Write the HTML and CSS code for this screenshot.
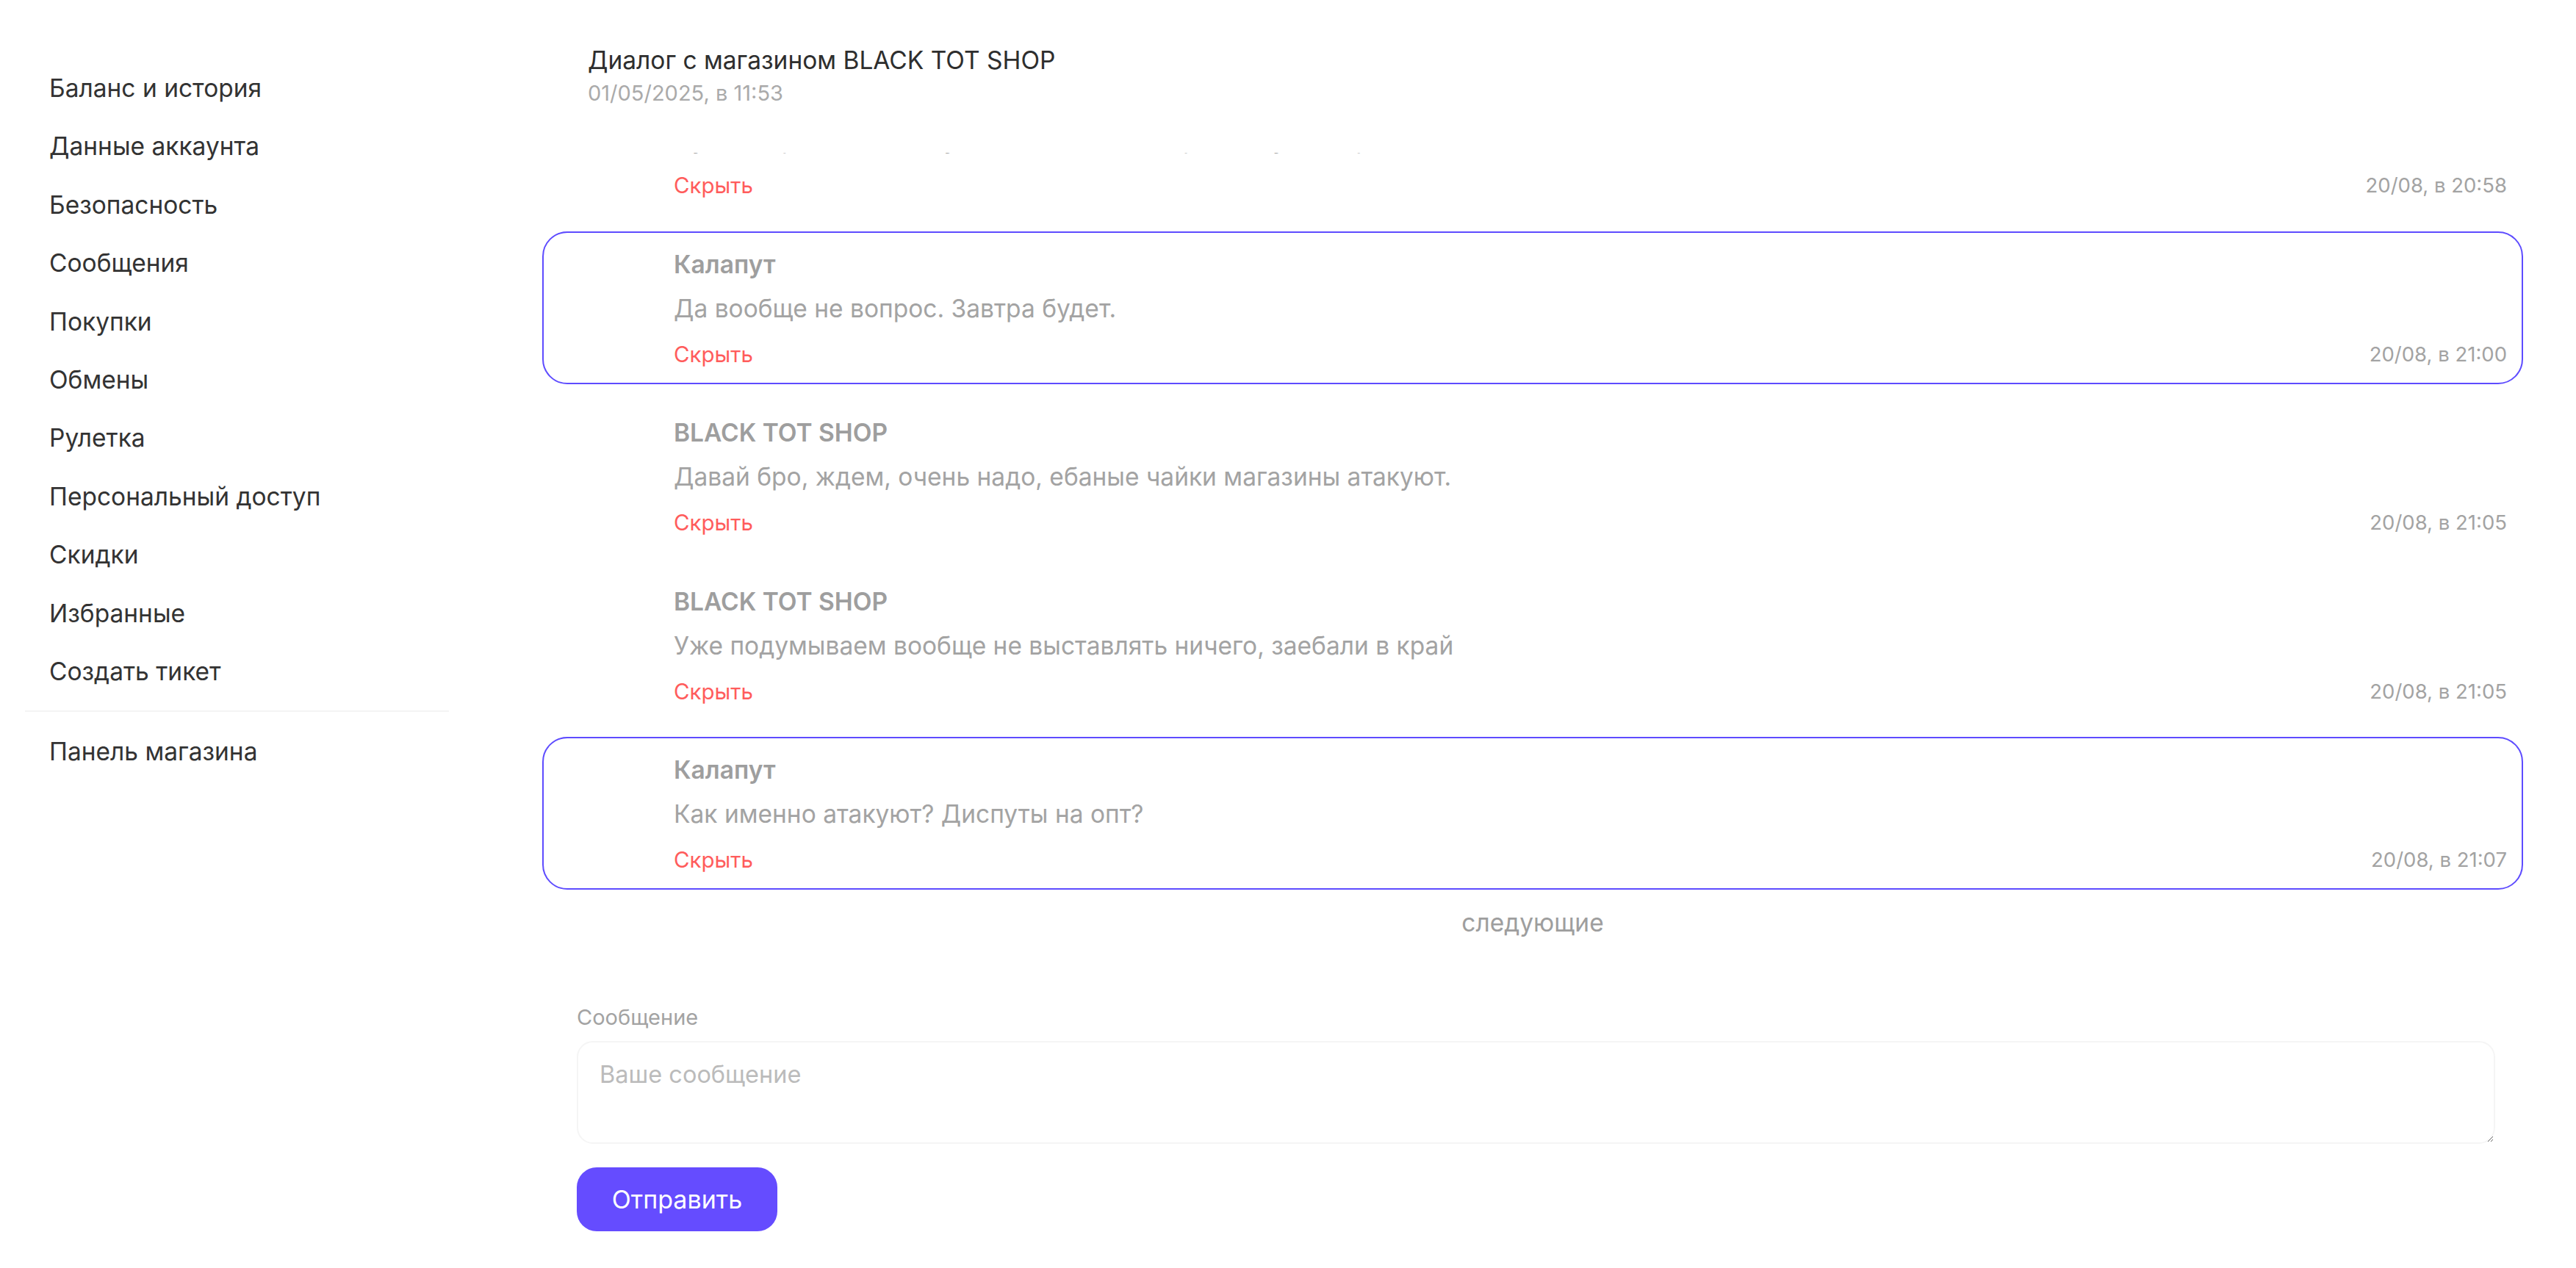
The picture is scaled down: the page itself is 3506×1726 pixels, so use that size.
FILE: index.html
```html
<!DOCTYPE html>
<html lang="ru">
<head>
  <meta charset="UTF-8" />
  <meta name="viewport" content="width=device-width, initial-scale=1.0"/>
  <title>Диалог с магазином BLACK TOT SHOP</title>
  <link rel="stylesheet" href="styles.css">
</head>
<body>

  <div class="page">

    <!-- SIDEBAR -->
    <aside class="sidebar">
      <nav class="menu">
        <a href="#">Баланс и история</a>
        <a href="#">Данные аккаунта</a>
        <a href="#">Безопасность</a>
        <a href="#">Сообщения</a>
        <a href="#">Покупки</a>
        <a href="#">Обмены</a>
        <a href="#">Рулетка</a>
        <a href="#">Персональный доступ</a>
        <a href="#">Скидки</a>
        <a href="#">Избранные</a>
        <a href="#">Создать тикет</a>
      </nav>
      <div class="divider"></div>
      <nav class="menu">
        <a href="#">Панель магазина</a>
      </nav>
    </aside>

    <!-- DIALOG -->
    <main class="dialog">
      <header class="dialog-head">
        <div class="dialog-title">Диалог с магазином BLACK TOT SHOP</div>
        <div class="dialog-date">01/05/2025, в 11:53</div>
      </header>

      <div class="messages">
        <div class="msg">
          <div class="msg-author">Калапут</div>
          <div class="msg-text">Привет, когда будет пополнение по опту?</div>
          <div class="msg-foot">
            <a href="#" class="msg-hide">Скрыть</a>
            <span class="msg-time">20/08, в 20:41</span>
          </div>
        </div>

        <div class="msg">
          <div class="msg-author">BLACK TOT SHOP</div>
          <div class="msg-text">Ну что, бро, сегодня будет? Очень ждем, ребята уже спрашивают.</div>
          <div class="msg-foot">
            <a href="#" class="msg-hide">Скрыть</a>
            <span class="msg-time">20/08, в 20:58</span>
          </div>
        </div>

        <div class="msg msg-own">
          <div class="msg-author">Калапут</div>
          <div class="msg-text">Да вообще не вопрос. Завтра будет.</div>
          <div class="msg-foot">
            <a href="#" class="msg-hide">Скрыть</a>
            <span class="msg-time">20/08, в 21:00</span>
          </div>
        </div>

        <div class="msg">
          <div class="msg-author">BLACK TOT SHOP</div>
          <div class="msg-text">Давай бро, ждем, очень надо, ебаные чайки магазины атакуют.</div>
          <div class="msg-foot">
            <a href="#" class="msg-hide">Скрыть</a>
            <span class="msg-time">20/08, в 21:05</span>
          </div>
        </div>

        <div class="msg">
          <div class="msg-author">BLACK TOT SHOP</div>
          <div class="msg-text">Уже подумываем вообще не выставлять ничего, заебали в край</div>
          <div class="msg-foot">
            <a href="#" class="msg-hide">Скрыть</a>
            <span class="msg-time">20/08, в 21:05</span>
          </div>
        </div>

        <div class="msg msg-own">
          <div class="msg-author">Калапут</div>
          <div class="msg-text">Как именно атакуют? Диспуты на опт?</div>
          <div class="msg-foot">
            <a href="#" class="msg-hide">Скрыть</a>
            <span class="msg-time">20/08, в 21:07</span>
          </div>
        </div>
      </div>

      <a href="#" class="more">следующие</a>

      <form class="reply">
        <label class="reply-label" for="replyText">Сообщение</label>
        <textarea class="reply-input" id="replyText" placeholder="Ваше сообщение"></textarea>
        <button type="button" class="reply-btn">Отправить</button>
      </form>
    </main>

  </div>

</body>
</html>
```

FILE: styles.css
```css
body {
  margin: 0;
  background: #fff;
  font-family: 'Inter', 'Noto Sans', sans-serif;
  color: #333;
}

a {
  text-decoration: none;
  color: inherit;
}

.page {
  display: flex;
  gap: 127px;
  padding: 0 72px 0 34px;
}

/* SIDEBAR */

.sidebar {
  width: 577px;
  flex-shrink: 0;
  padding-top: 81px;
}

.menu {
  display: flex;
  flex-direction: column;
}

.menu a {
  padding: 20px 33px;
  font-size: 33.5px;
  line-height: 39.4px;
  color: #333;
}

.divider {
  height: 2px;
  background: #f4f4f4;
  margin: 13px 0 15px;
}

/* DIALOG */

.dialog {
  flex: 1;
  min-width: 0;
  display: flex;
  flex-direction: column;
}

.dialog-head {
  padding: 60px 0 0 62px;
}

.dialog-title {
  font-size: 33.5px;
  line-height: 44px;
  color: #2e2e2e;
}

.dialog-date {
  font-size: 29px;
  line-height: 36px;
  margin-top: 5px;
  color: #aaa;
}

.messages {
  height: 1003px;
  margin-top: 63px;
  overflow: hidden;
  display: flex;
  flex-direction: column;
  justify-content: flex-end;
  gap: 21.5px;
}

.msg {
  flex-shrink: 0;
  height: 208px;
  box-sizing: border-box;
  border: 2px solid transparent;
  border-radius: 34px;
  padding: 21px 20px 0 177px;
}

.msg-own {
  border-color: #5e4cff;
}

.msg-author {
  font-size: 33.5px;
  line-height: 44px;
  font-weight: 600;
  color: #9e9e9e;
}

.msg-text {
  font-size: 33.5px;
  line-height: 44px;
  margin-top: 16px;
  color: #a3a3a3;
}

.msg-foot {
  display: flex;
  justify-content: space-between;
  align-items: center;
  margin-top: 22px;
  line-height: 36px;
}

.msg-hide {
  font-size: 29.5px;
  color: #ff5c5c;
}

.msg-time {
  font-size: 27.5px;
  color: #a3a3a3;
}

.more {
  align-self: center;
  margin-top: 25px;
  font-size: 33.5px;
  line-height: 40px;
  color: #9e9e9e;
}

/* REPLY FORM */

.reply {
  display: flex;
  flex-direction: column;
  align-items: flex-start;
  margin: 91px 38px 0 47px;
}

.reply-label {
  font-size: 29px;
  line-height: 36px;
  color: #a3a3a3;
}

.reply-input {
  width: 100%;
  height: 140px;
  box-sizing: border-box;
  margin-top: 14px;
  padding: 24px 29px;
  border: 2px solid #f5f5f5;
  border-radius: 22px;
  font-family: inherit;
  font-size: 32.5px;
  line-height: 40px;
  color: #333;
  outline: none;
}

.reply-input::placeholder {
  color: #bbb;
}

.reply-btn {
  margin-top: 32px;
  width: 273px;
  height: 87px;
  border: none;
  border-radius: 27px;
  background: #654cff;
  color: #fff;
  font-family: inherit;
  font-size: 34px;
  cursor: pointer;
}
```
